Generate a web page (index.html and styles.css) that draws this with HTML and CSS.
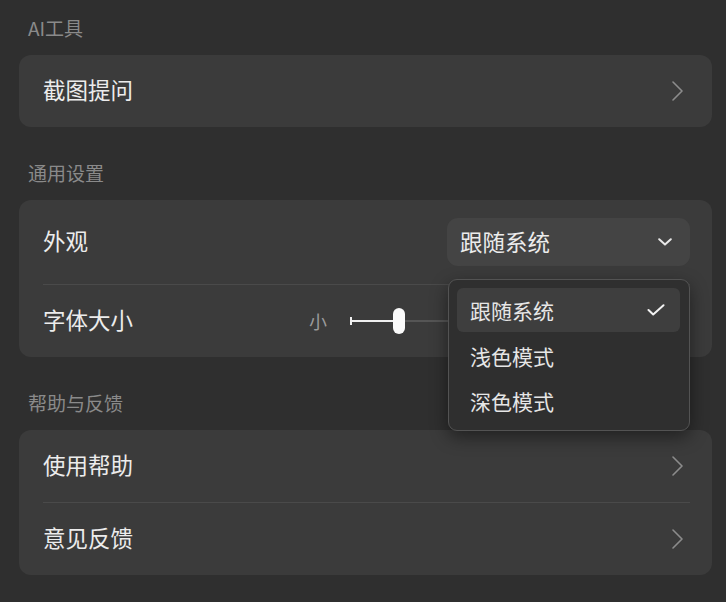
FILE: index.html
```html
<!DOCTYPE html>
<html lang="zh-CN">
<head>
<meta charset="utf-8">
<title>设置</title>
<link rel="stylesheet" href="styles.css">
</head>
<body>
<main class="settings">
  <section class="group first">
    <h2 class="group-title">AI工具</h2>
    <div class="card">
      <div class="row">
        <span class="row-label">截图提问</span>
        <svg class="chevron" viewBox="0 0 20 20" width="20" height="20"><path d="M3 1 L12 10 L3 19" fill="none" stroke="currentColor" stroke-width="1.6" stroke-linecap="round" stroke-linejoin="round"/></svg>
      </div>
    </div>
  </section>

  <section class="group">
    <h2 class="group-title">通用设置</h2>
    <div class="card">
      <div class="row row-tall">
        <span class="row-label">外观</span>
        <div class="select-wrap">
          <div class="select">
            <span>跟随系统</span>
            <svg class="select-caret" viewBox="0 0 14 8" width="14" height="8"><path d="M1.2 1.2 L7 6.6 L12.8 1.2" fill="none" stroke="currentColor" stroke-width="2" stroke-linecap="round" stroke-linejoin="round"/></svg>
          </div>
          <ul class="menu">
            <li class="menu-item selected">
              <span>跟随系统</span>
              <svg class="check" viewBox="0 0 18 12" width="18" height="12"><path d="M1.5 6 L6.2 10.5 L16.5 1.2" fill="none" stroke="currentColor" stroke-width="2" stroke-linecap="round" stroke-linejoin="round"/></svg>
            </li>
            <li class="menu-item">浅色模式</li>
            <li class="menu-item">深色模式</li>
          </ul>
        </div>
      </div>
      <div class="divider"></div>
      <div class="row">
        <span class="row-label">字体大小</span>
        <div class="slider-group">
          <span class="slider-end">小</span>
          <div class="slider">
            <span class="slider-cap"></span>
            <span class="slider-fill"></span>
            <span class="slider-thumb"></span>
            <span class="slider-rest"></span>
          </div>
          <span class="slider-end">大</span>
        </div>
      </div>
    </div>
  </section>

  <section class="group">
    <h2 class="group-title">帮助与反馈</h2>
    <div class="card">
      <div class="row">
        <span class="row-label">使用帮助</span>
        <svg class="chevron" viewBox="0 0 20 20" width="20" height="20"><path d="M3 1 L12 10 L3 19" fill="none" stroke="currentColor" stroke-width="1.6" stroke-linecap="round" stroke-linejoin="round"/></svg>
      </div>
      <div class="divider"></div>
      <div class="row">
        <span class="row-label">意见反馈</span>
        <svg class="chevron" viewBox="0 0 20 20" width="20" height="20"><path d="M3 1 L12 10 L3 19" fill="none" stroke="currentColor" stroke-width="1.6" stroke-linecap="round" stroke-linejoin="round"/></svg>
      </div>
    </div>
  </section>
</main>
</body>
</html>
```

FILE: styles.css
```css
* { box-sizing: border-box; }

html, body {
  margin: 0;
  padding: 0;
  background: #2f2f2f;
  height: 100%;
  overflow: hidden;
}

body {
  font-family: "Noto Sans CJK SC", "Noto Sans", "Liberation Sans", sans-serif;
  color: #e9e9e9;
}

.settings {
  padding: 16px 14px 0 19px;
}

.group {
  margin-top: 34px;
}

.group.first {
  margin-top: 0;
}

.group-title {
  margin: 0 0 15px 9px;
  height: 24px;
  line-height: 24px;
  font-size: 19px;
  font-weight: 400;
  color: #8a8a8a;
}

.card {
  background: #3b3b3b;
  border-radius: 12px;
}

.row {
  height: 72px;
  display: flex;
  align-items: center;
  justify-content: space-between;
  padding: 0 22px 0 24px;
}

.row-tall {
  height: 84px;
}

.row-label {
  font-size: 22.5px;
  line-height: 1;
  padding-bottom: 3px;
  color: #ececec;
}

.chevron {
  color: #8c8c8c;
  display: block;
}

.divider {
  height: 1px;
  background: #4a4a4a;
  margin: 0 22px 0 24px;
}

/* select */
.select-wrap {
  position: relative;
}

.select {
  width: 243px;
  height: 48px;
  border-radius: 11px;
  background: #444444;
  display: flex;
  align-items: center;
  justify-content: space-between;
  padding: 0 18px 2px 13px;
  font-size: 22.5px;
  color: #ececec;
}

.select-caret {
  display: block;
  margin-top: 2px;
  color: #e8e8e8;
}

.menu {
  position: absolute;
  top: calc(100% + 13px);
  right: 0;
  width: 242px;
  margin: 0;
  list-style: none;
  padding: 8px 9px 7px 8px;
  background: #2f2f2f;
  border: 1px solid #535353;
  border-radius: 9px;
  box-shadow: 0 6px 18px rgba(0, 0, 0, 0.45);
  z-index: 10;
}

.menu-item {
  height: 45px;
  display: flex;
  align-items: center;
  justify-content: space-between;
  padding: 0 15px 0 13px;
  font-size: 21px;
  color: #e6e6e6;
  border-radius: 6px;
}

.menu-item.selected {
  height: 44px;
  margin-bottom: 1px;
  background: #3e3e3e;
}

.check {
  display: block;
  color: #f2f2f2;
}

/* slider */
.slider-group {
  display: flex;
  align-items: center;
}

.slider-end {
  font-size: 18px;
  color: #9a9a9a;
  line-height: 1;
}

.slider {
  position: relative;
  width: 308px;
  height: 26px;
  margin: 0 14px 0 23px;
  display: flex;
  align-items: center;
}

.slider-cap {
  width: 2px;
  height: 8px;
  background: #f0f0f0;
  flex: none;
}

.slider-fill {
  width: 41px;
  height: 2px;
  background: #f0f0f0;
  flex: none;
}

.slider-thumb {
  width: 12px;
  height: 26px;
  border-radius: 6px;
  background: #fafafa;
  flex: none;
}

.slider-rest {
  flex: 1;
  height: 2px;
  background: #555555;
}
```
